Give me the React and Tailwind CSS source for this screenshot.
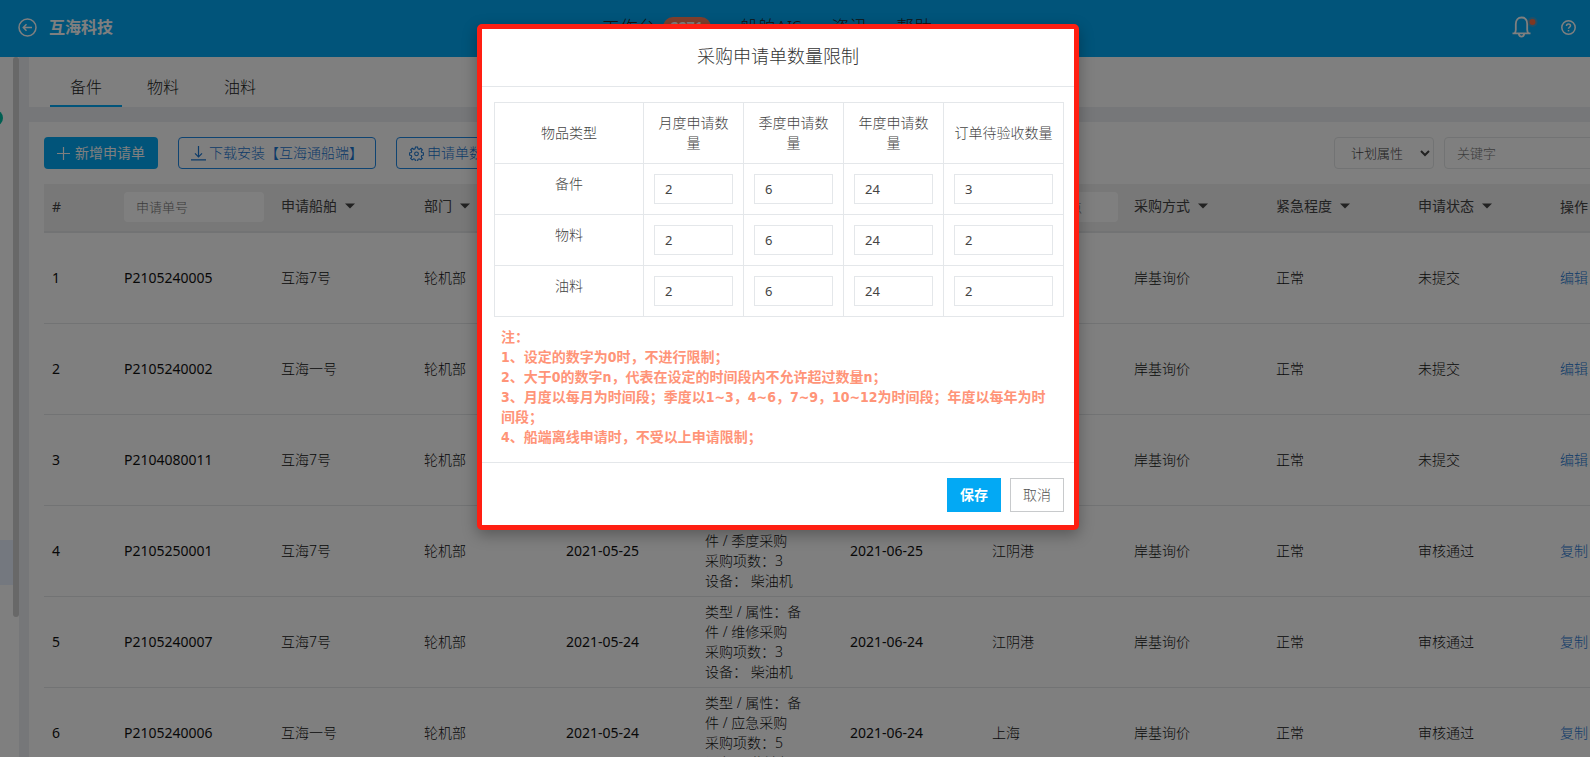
import React from "react";

const shipRows = [
  { no: 1, code: "P2105240005", ship: "互海7号", date: "2021-05-24", kind: "季度采购", count: 3, device: "柴油机", due: "2021-06-24", port: "江阴港", status: "未提交", action: "编辑" },
  { no: 2, code: "P2105240002", ship: "互海一号", date: "2021-05-24", kind: "季度采购", count: 3, device: "柴油机", due: "2021-06-24", port: "上海", status: "未提交", action: "编辑" },
  { no: 3, code: "P2104080011", ship: "互海7号", date: "2021-04-08", kind: "季度采购", count: 3, device: "柴油机", due: "2021-05-08", port: "江阴港", status: "未提交", action: "编辑" },
  { no: 4, code: "P2105250001", ship: "互海7号", date: "2021-05-25", kind: "季度采购", count: 3, device: "柴油机", due: "2021-06-25", port: "江阴港", status: "审核通过", action: "复制" },
  { no: 5, code: "P2105240007", ship: "互海7号", date: "2021-05-24", kind: "维修采购", count: 3, device: "柴油机", due: "2021-06-24", port: "江阴港", status: "审核通过", action: "复制" },
  { no: 6, code: "P2105240006", ship: "互海一号", date: "2021-05-24", kind: "应急采购", count: 5, device: "柴油机", due: "2021-06-24", port: "上海", status: "审核通过", action: "复制" },
];

const limits = [
  { name: "备件", values: [2, 6, 24, 3] },
  { name: "物料", values: [2, 6, 24, 2] },
  { name: "油料", values: [2, 6, 24, 2] },
];

const limitHeads = ["月度申请数量", "季度申请数量", "年度申请数量", "订单待验收数量"];

function Caret() {
  return (
    <svg width="10" height="6" viewBox="0 0 10 6" fill="currentColor" aria-hidden="true">
      <path d="M0 .5h10L5 5.5z" />
    </svg>
  );
}

function HeadFilter({ children }) {
  return (
    <button type="button" className="flex items-center gap-2 pb-0.5">
      {children}
      <Caret />
    </button>
  );
}

function TopBar() {
  return (
    <header className="flex h-[57px] items-center bg-[#03a9f4] pr-3.5 pb-[3px] pl-[18px] text-white">
      <div className="flex flex-1 items-center gap-3">
        <button type="button" aria-label="返回">
          <svg width="19" height="19" viewBox="0 0 19 19" fill="none" stroke="currentColor" strokeWidth="1.5" aria-hidden="true">
            <circle cx="9.5" cy="9.5" r="8.5" />
            <path d="M14 9.500H5.500M8.500 6.300L5.300 9.500l3.200 3.200" />
          </svg>
        </button>
        <span className="text-base font-bold">互海科技</span>
      </div>
      <nav className="mr-[60px] flex items-center gap-[29px] text-lg leading-6 font-light text-[#222]">
        <a href="#work" className="flex items-center gap-[7px]">
          工作台
          <span className="flex h-5 w-12 items-center justify-center rounded-full bg-[#ff7f5b] text-sm font-bold text-white">2271</span>
        </a>
        <a href="#ais">船舶AIS</a>
        <a href="#news">资讯</a>
        <a href="#help">帮助</a>
      </nav>
      <div className="flex flex-1 items-center justify-end gap-[23px]">
        <button type="button" aria-label="通知">
          <svg width="26" height="22" viewBox="0 0 26 22" fill="none" aria-hidden="true">
            <path d="M.5 17.300h18M2.500 17.300c1-1 1.300-2 1.300-3.500V8C3.800 4 6 1.500 9.500 1.500S15.200 4 15.200 8v5.800c0 1.500.3 2.500 1.300 3.500M6.800 18c.4 1.700 1.400 2.600 2.700 2.600s2.300-.9 2.700-2.600" stroke="currentColor" strokeWidth="1.800" />
            <circle cx="20.500" cy="6" r="5" fill="#ff7f5b" opacity=".25" />
            <circle cx="20.500" cy="6" r="3" fill="#ff7043" />
          </svg>
        </button>
        <button type="button" aria-label="帮助">
          <svg width="15" height="15" viewBox="0 0 15 15" fill="none" stroke="currentColor" strokeWidth="1.500" aria-hidden="true">
            <circle cx="7.500" cy="7.500" r="6.700" />
            <path d="M5.500 6c0-1.300.9-2 2-2s2 .8 2 1.800c0 1.400-2 1.500-2 3" />
            <path d="M7.500 10v1.400" />
          </svg>
        </button>
      </div>
    </header>
  );
}

function SideStrip() {
  return (
    <aside className="flex w-[19px] shrink-0 bg-white">
      <div className="w-[13px] overflow-hidden">
        <div className="mt-[53px] -ml-[13px] h-4 w-4 rounded-full bg-[#00bfa5]" />
        <div className="mt-[414px] h-[45px] bg-[#e8f0ff]" />
      </div>
      <div className="h-[560px] w-1.5 rounded-full bg-[#d0d0d0]" />
    </aside>
  );
}

function Tabs() {
  return (
    <div className="flex h-[50px] gap-[5px] bg-white pl-[21px] text-base font-light text-[#222]">
      <button type="button" className="h-full border-b-2 border-[#03a9f4] px-5 pt-3">备件</button>
      <button type="button" className="h-full border-b-2 border-transparent px-5 pt-3">物料</button>
      <button type="button" className="h-full border-b-2 border-transparent px-5 pt-3">油料</button>
    </div>
  );
}

function Toolbar() {
  return (
    <div className="flex h-8 items-stretch justify-between">
      <div className="flex gap-5">
        <button type="button" className="flex items-center gap-1 rounded bg-[#03a9f4] px-3 text-white">
          <svg width="15" height="15" viewBox="0 0 15 15" stroke="currentColor" strokeWidth="1.200" aria-hidden="true">
            <path d="M7.500 1v13M1 7.500h13" />
          </svg>
          <span className="pr-px">新增申请单</span>
        </button>
        <button type="button" className="flex items-center gap-[3px] rounded border border-[#1e88e5] px-3 font-light text-[#1976d2]">
          <svg width="15" height="15" viewBox="0 0 15 15" fill="none" stroke="currentColor" strokeWidth="1.200" aria-hidden="true">
            <path d="M7.500 0v10.500M4 7.300l3.500 3.500L11 7.300M0 13.800h15" />
          </svg>
          下载安装【互海通船端】
        </button>
        <button type="button" className="flex items-center gap-[3px] rounded border border-[#1e88e5] px-3 font-light text-[#1976d2]">
          <svg width="15" height="15" viewBox="0 0 24 24" fill="none" stroke="currentColor" strokeWidth="1.700" aria-hidden="true">
            <path d="M10.300 1.500h3.400l.6 3 2 .8 2.600-1.700 2.400 2.400-1.700 2.600.8 2 3 .6v3.400l-3 .6-.8 2 1.700 2.600-2.400 2.400-2.600-1.700-2 .8-.6 3h-3.400l-.6-3-2-.8-2.600 1.700-2.400-2.400 1.700-2.600-.8-2-3-.6v-3.400l3-.6.8-2L2.700 6l2.400-2.400 2.600 1.700 2-.8z" />
            <circle cx="12" cy="12.500" r="3" />
          </svg>
          申请单数量限制
        </button>
      </div>
      <div className="flex gap-2.5">
        <select aria-label="计划属性" className="w-[100px] rounded border border-[#e4e6e8] bg-white pl-3 text-[13px] font-light text-[#444]">
          <option>计划属性</option>
        </select>
        <input aria-label="关键字" placeholder="关键字" className="w-[200px] rounded border border-[#e4e6e8] px-3 text-[13px] font-light placeholder:text-[#777]" />
      </div>
    </div>
  );
}

function RequestTable() {
  return (
    <table className="mt-[15px] w-full table-fixed border-collapse text-left text-[#111]">
      <colgroup>
        <col className="w-[72px]" />
        <col className="w-[157px]" />
        <col className="w-[143px]" />
        <col className="w-[142px]" />
        <col className="w-[139px]" />
        <col className="w-[145px]" />
        <col className="w-[142px]" />
        <col className="w-[142px]" />
        <col className="w-[142px]" />
        <col className="w-[142px]" />
        <col className="w-[142px]" />
        <col />
      </colgroup>
      <thead className="bg-[#f0f0f0] text-[#444]">
        <tr className="h-12 border-b-2 border-[#e4e6e8] [&>th]:px-2 [&>th]:pb-0.5 [&>th]:font-normal">
          <th>#</th>
          <th>
            <input aria-label="申请单号" placeholder="申请单号" className="block h-[30px] w-[140px] rounded bg-white px-3 text-[13px] font-light placeholder:text-[#777]" />
          </th>
          <th><HeadFilter>申请船舶</HeadFilter></th>
          <th><HeadFilter>部门</HeadFilter></th>
          <th>申请日期</th>
          <th>申请信息</th>
          <th>供应日期</th>
          <th>
            <input aria-label="供应交货地点" placeholder="供应交货地点" className="block h-[30px] w-full rounded bg-white px-3 text-[13px] font-light placeholder:text-[#777]" />
          </th>
          <th><HeadFilter>采购方式</HeadFilter></th>
          <th><HeadFilter>紧急程度</HeadFilter></th>
          <th><HeadFilter>申请状态</HeadFilter></th>
          <th>操作</th>
        </tr>
      </thead>
      <tbody>
        {shipRows.map((r) => (
          <tr key={r.no} className="h-[91px] border-b border-[#e4e6e8] font-light [&>td]:px-2">
            <td className="font-normal">{r.no}</td>
            <td className="font-normal">{r.code}</td>
            <td>{r.ship}</td>
            <td>轮机部</td>
            <td className="font-normal">{r.date}</td>
            <td className="leading-5">
              <div className="w-[104px]">类型 / 属性：备件 / {r.kind}</div>
              <div>采购项数：{r.count}</div>
              <div>设备： {r.device}</div>
            </td>
            <td className="font-normal">{r.due}</td>
            <td>{r.port}</td>
            <td>岸基询价</td>
            <td>正常</td>
            <td>{r.status}</td>
            <td><a href={"#" + r.code} className="text-[#1976d2]">{r.action}</a></td>
          </tr>
        ))}
      </tbody>
    </table>
  );
}

function LimitDialog() {
  return (
    <div role="dialog" aria-modal="true" aria-labelledby="limit-title" className="w-[602px] rounded-[5px] border-[5px] border-[#ff1f12] bg-white text-[#444] shadow-[0_5px_15px_rgba(0,0,0,0.3)]">
      <h2 id="limit-title" className="border-b border-[#e4e7ea] pt-3.5 pb-4 text-center text-lg leading-[27px] font-light text-[#333]">采购申请单数量限制</h2>
      <div className="py-[15px] pr-2.5 pl-3">
        <table className="w-full table-fixed border-collapse text-center leading-5 [&_td]:border [&_td]:border-[#e4e7ea] [&_td]:p-2.5 [&_td]:align-top [&_th]:border [&_th]:border-[#e4e7ea] [&_th]:px-2.5 [&_th]:py-2.5 [&_th]:font-light">
          <colgroup>
            <col className="w-[149px]" />
            <col className="w-[100px]" />
            <col className="w-[100px]" />
            <col className="w-[100px]" />
            <col />
          </colgroup>
          <thead>
            <tr>
              <th>物品类型</th>
              {limitHeads.map((h) => (
                <th key={h}>{h}</th>
              ))}
            </tr>
          </thead>
          <tbody>
            {limits.map((row) => (
              <tr key={row.name}>
                <td className="font-light">{row.name}</td>
                {row.values.map((v, i) => (
                  <td key={i}>
                    <input aria-label={row.name + limitHeads[i]} defaultValue={v} className="block h-[30px] w-full border border-[#e4e7ea] px-2.5 text-[13px]" />
                  </td>
                ))}
              </tr>
            ))}
          </tbody>
        </table>
        <div className="pt-2.5 pr-2.5 pl-[7px] font-['DejaVu_Sans_Condensed','Noto_Sans_CJK_SC',sans-serif] leading-5 font-bold text-[#ff9478]">
          <p>注：</p>
          <p>1、设定的数字为0时，不进行限制；</p>
          <p>2、大于0的数字n，代表在设定的时间段内不允许超过数量n；</p>
          <p>3、月度以每月为时间段；季度以1~3，4~6，7~9，10~12为时间段；年度以每年为时间段；</p>
          <p>4、船端离线申请时，不受以上申请限制；</p>
        </div>
      </div>
      <div className="flex justify-end gap-[9px] border-t border-[#e4e7ea] pt-[15px] pr-2.5 pb-[13px]">
        <button type="button" className="h-[34px] w-[54px] bg-[#03a9f4] font-bold text-white">保存</button>
        <button type="button" className="h-[34px] w-[54px] border border-[#c8cacc] font-light text-[#555]">取消</button>
      </div>
    </div>
  );
}

export default function App() {
  return (
    <div className="relative h-screen overflow-hidden bg-[#eceff3] font-['Noto_Sans','Noto_Sans_CJK_SC',sans-serif] text-sm">
      <div className="flex h-full flex-col">
        <TopBar />
        <div className="flex min-h-0 flex-1 gap-2.5">
          <SideStrip />
          <main className="min-w-0 flex-1 overflow-hidden">
            <Tabs />
            <section className="mt-[15px] overflow-hidden bg-white pt-[15px] pl-[15px]">
              <div className="w-[1600px]">
                <Toolbar />
                <RequestTable />
              </div>
            </section>
          </main>
        </div>
      </div>
      <div className="absolute inset-0 flex items-start justify-center bg-black/50 pt-6 pr-[34px]">
        <LimitDialog />
      </div>
    </div>
  );
}
